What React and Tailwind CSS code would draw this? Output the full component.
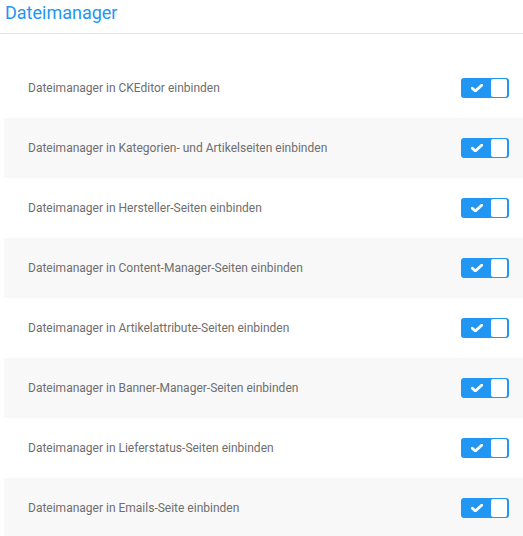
import React from "react";

const items = [
  "Dateimanager in CKEditor einbinden",
  "Dateimanager in Kategorien- und Artikelseiten einbinden",
  "Dateimanager in Hersteller-Seiten einbinden",
  "Dateimanager in Content-Manager-Seiten einbinden",
  "Dateimanager in Artikelattribute-Seiten einbinden",
  "Dateimanager in Banner-Manager-Seiten einbinden",
  "Dateimanager in Lieferstatus-Seiten einbinden",
  "Dateimanager in Emails-Seite einbinden",
];

function Toggle() {
  return (
    <div className="w-[48px] h-[20px] rounded-[3px] bg-[#2196f3] flex items-center pl-[10px] pr-[2px] justify-between">
      <svg width="12" height="8" viewBox="0 0 12 8" className="block">
        <path d="M1.3 4.3 L4.3 7 L10.7 1.2" fill="none" stroke="#ffffff" strokeWidth="2.8" strokeLinecap="round" strokeLinejoin="round" />
      </svg>
      <div className="w-[16px] h-[18px] bg-white rounded-[2px]" />
    </div>
  );
}

export default function App() {
  return (
    <div className="w-[523px] h-[536px] bg-white overflow-hidden" style={{ fontFamily: "Roboto, 'Liberation Sans', sans-serif" }}>
      <div className="h-[34px] border-b border-[#e3e3e3] pl-[5px]">
        <div className="text-[18px] leading-[26px] text-[#2196f3]">Dateimanager</div>
      </div>
      <div className="pt-[24px] pl-[4px]">
        {items.map((t, i) => (
          <div key={i} className={`h-[60px] flex items-center justify-between pl-[24px] pr-[14px] ${i % 2 === 1 ? "bg-[#f8f8f8]" : "bg-white"}`}>
            <span className="text-[12px] text-[#6e6e6e]">{t}</span>
            <Toggle />
          </div>
        ))}
      </div>
    </div>
  );
}
